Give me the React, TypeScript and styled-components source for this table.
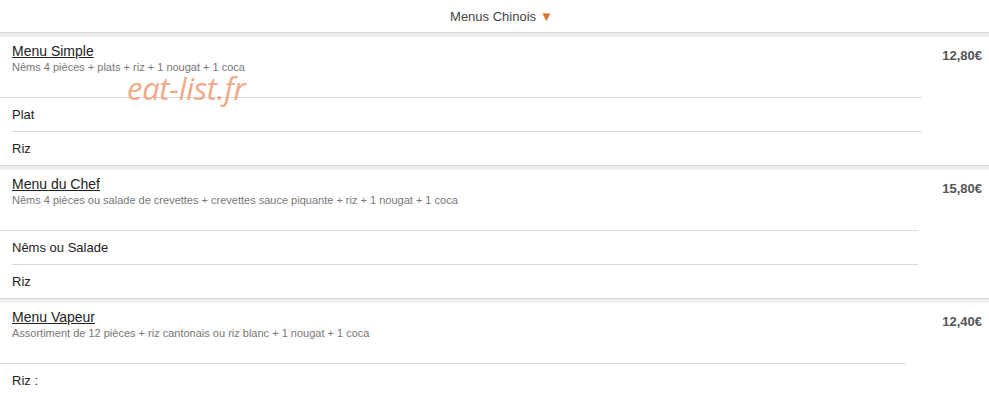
import React from "react";
import styled, { createGlobalStyle } from "styled-components";

const GlobalStyle = createGlobalStyle`
  html, body {
    margin: 0;
    padding: 0;
    background: #ffffff;
  }
  body {
    font-family: "Liberation Sans", Arial, sans-serif;
    color: #222;
    overflow: hidden;
  }
`;

const Page = styled.div`
  position: relative;
  width: 989px;
`;

const CategoryBar = styled.div`
  height: 32px;
  display: flex;
  align-items: center;
  justify-content: center;
  padding-left: 14px;
  font-size: 13px;
  color: #444;
  gap: 4px;
`;

const Arrow = styled.span`
  color: #e0702e;
  font-size: 13px;
  line-height: 1;
  margin-top: 1px;
`;

const Band = styled.div`
  height: 4px;
  border-top: 1px solid #d6d6d6;
  background: #ededed;
`;

const Block = styled.section`
  display: flex;
`;

const Left = styled.div<{ $width: number }>`
  width: ${(p) => p.$width}px;
  flex-shrink: 0;
`;

const Header = styled.div`
  height: 60px;
  box-sizing: border-box;
  padding: 6px 0 0 12px;
`;

const Title = styled.a`
  display: block;
  font-size: 14px;
  line-height: 17px;
  color: #222;
  text-decoration: underline;
  text-underline-offset: 1px;
`;

const Desc = styled.div`
  font-size: 11px;
  line-height: 14px;
  color: #777;
`;

const Row = styled.div<{ $inset?: boolean }>`
  height: 33px;
  display: flex;
  align-items: center;
  border-top: 1px solid #d8d8d8;
  margin-left: ${(p) => (p.$inset ? "12px" : "0")};
  padding-left: ${(p) => (p.$inset ? "0" : "12px")};
  font-size: 13px;
  color: #222;
`;

const Price = styled.div`
  flex: 1;
  text-align: right;
  padding: 11px 7px 0 0;
  font-size: 13px;
  font-weight: bold;
  color: #555;
`;

const Watermark = styled.div`
  position: absolute;
  left: 127px;
  top: 67px;
  font-family: "Open Sans", sans-serif;
  font-style: italic;
  font-size: 31px;
  color: #eea17e;
  opacity: 0.9;
  pointer-events: none;
  letter-spacing: -0.3px;
`;

const menus = [
  {
    title: "Menu Simple",
    desc: "Nêms 4 pièces + plats + riz + 1 nougat + 1 coca",
    price: "12,80€",
    width: 922,
    rows: ["Plat", "Riz"],
  },
  {
    title: "Menu du Chef",
    desc: "Nêms 4 pièces ou salade de crevettes + crevettes sauce piquante + riz + 1 nougat + 1 coca",
    price: "15,80€",
    width: 918,
    rows: ["Nêms ou Salade", "Riz"],
  },
  {
    title: "Menu Vapeur",
    desc: "Assortiment de 12 pièces + riz cantonais ou riz blanc + 1 nougat + 1 coca",
    price: "12,40€",
    width: 906,
    rows: ["Riz :"],
  },
];

export default function App() {
  return (
    <Page>
      <GlobalStyle />
      <CategoryBar>
        Menus Chinois <Arrow>▼</Arrow>
      </CategoryBar>
      {menus.map((m) => (
        <div key={m.title}>
          <Band />
          <Block>
            <Left $width={m.width}>
              <Header>
                <Title>{m.title}</Title>
                <Desc>{m.desc}</Desc>
              </Header>
              {m.rows.map((r, i) => (
                <Row key={i} $inset={i > 0}>
                  {r}
                </Row>
              ))}
            </Left>
            <Price>{m.price}</Price>
          </Block>
        </div>
      ))}
      <Watermark>eat-list.fr</Watermark>
    </Page>
  );
}
